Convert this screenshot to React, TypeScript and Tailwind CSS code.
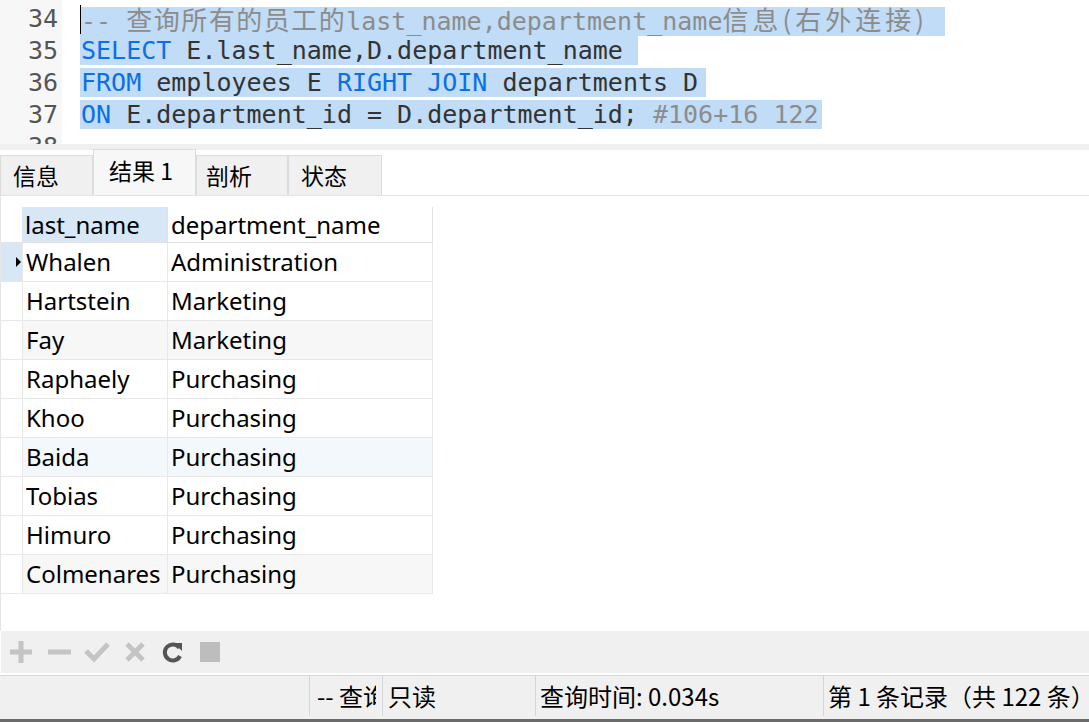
import React from 'react';

const mono = "font-['DejaVu_Sans_Mono',monospace]";
const cjk = "font-['Noto_Sans_CJK_SC',sans-serif]";
const ui = "font-['Noto_Sans','Noto_Sans_CJK_SC',sans-serif]";

const rows = [
  { name: 'Whalen', dept: 'Administration', bg: 'bg-white', current: true },
  { name: 'Hartstein', dept: 'Marketing', bg: 'bg-white' },
  { name: 'Fay', dept: 'Marketing', bg: 'bg-[#f7f7f7]' },
  { name: 'Raphaely', dept: 'Purchasing', bg: 'bg-white' },
  { name: 'Khoo', dept: 'Purchasing', bg: 'bg-white' },
  { name: 'Baida', dept: 'Purchasing', bg: 'bg-[#f3f8fd]' },
  { name: 'Tobias', dept: 'Purchasing', bg: 'bg-white' },
  { name: 'Himuro', dept: 'Purchasing', bg: 'bg-white' },
  { name: 'Colmenares', dept: 'Purchasing', bg: 'bg-[#f7f7f7]' },
];

function Kw({ children }: { children: React.ReactNode }) {
  return <span className="text-[#0b6fe6]">{children}</span>;
}

function Editor() {
  return (
    <div className={`flex h-[144px] overflow-hidden bg-white ${mono} text-[25px] leading-[32px]`}>
      <div className="w-[62px] shrink-0 bg-[#f7f7f7] pt-[3px] pr-[4px] text-right text-[#555]">
        <div>34</div>
        <div>35</div>
        <div>36</div>
        <div>37</div>
        <div>38</div>
      </div>
      <div className="ml-[18px] pt-[3px] whitespace-pre text-[#333]">
        <div className="relative h-[32px]">
          <span className="bg-[#c0dcf6] pl-[1px] pr-[17px] text-[#8c8c8c]">
            -- <span className={`${cjk} text-[26px] tracking-[1.5px]`}>查询所有的员工的</span>
            last_name,department_name
            <span className={`${cjk} text-[26px] tracking-[4px]`}>信息(右外连接)</span>
          </span>
          <span className="absolute left-0 top-[2px] h-[29px] w-[1px] bg-black" />
        </div>
        <div className="h-[32px]">
          <span className="bg-[#c0dcf6] pl-[1px]">
            <Kw>SELECT</Kw> E.last_name,D.department_name{' '}
          </span>
        </div>
        <div className="h-[32px]">
          <span className="bg-[#c0dcf6] pl-[1px] pr-[8px]">
            <Kw>FROM</Kw> employees E <Kw>RIGHT</Kw> <Kw>JOIN</Kw> departments D
          </span>
        </div>
        <div className="h-[32px]">
          <span className="bg-[#c0dcf6] pl-[1px] pr-[3px]">
            <Kw>ON</Kw> E.department_id = D.department_id; <span className="text-[#8c8c8c]">#106+16 122</span>
          </span>
        </div>
      </div>
    </div>
  );
}

function Tabs() {
  const tab = `flex h-[40px] items-center border border-b-0 border-[#dcdcdc] bg-[#f0f0f0] text-[23px] text-black ${cjk}`;
  return (
    <div className="flex h-[52px] items-end border-t-[6px] border-[#f0f0f0] bg-white">
      <div className="flex h-[46px] w-full items-end border-b border-[#e3e3e3]">
        <div className={`${tab} w-[93px] pl-[12px]`}>信息</div>
        <div className={`flex h-[46px] w-[103px] items-center border border-b-0 border-[#dcdcdc] bg-[#f7f7f7] pb-[4px] pl-[15px] text-[23px] text-black ${cjk}`}>
          结果 1
        </div>
        <div className={`${tab} w-[92px] pl-[9px]`}>剖析</div>
        <div className={`${tab} w-[94px] pl-[12px]`}>状态</div>
      </div>
    </div>
  );
}

function Grid() {
  return (
    <div className={`flex-1 border-l border-[#e6e6e6] bg-white pt-[11px] ${ui} text-[24px] text-black`}>
      <div className="w-[432px]">
        <div className="flex h-[36px] border-b border-[#e2e2e2]">
          <div className="w-[21px] shrink-0" />
          <div className="flex w-[145px] shrink-0 items-center bg-[#d7e7f6] pl-[3px]">last_name</div>
          <div className="flex w-[266px] shrink-0 items-center border-l border-r border-[#e2e2e2] pl-[3px]">department_name</div>
        </div>
        {rows.map((r) => (
          <div key={r.name} className="flex h-[39px] border-b border-[#e8e8e8]">
            <div className={`flex w-[21px] shrink-0 items-center justify-end pr-[1px] ${r.current ? 'bg-[#d7e7f6]' : 'bg-white'}`}>
              {r.current && (
                <span className="h-0 w-0 border-y-[5px] border-l-[5px] border-y-transparent border-l-black" />
              )}
            </div>
            <div className={`flex w-[145px] shrink-0 items-center overflow-hidden whitespace-nowrap border-l border-[#e8e8e8] pl-[3px] ${r.bg}`}>{r.name}</div>
            <div className={`flex w-[266px] shrink-0 items-center border-l border-r border-[#e8e8e8] pl-[3px] ${r.bg}`}>{r.dept}</div>
          </div>
        ))}
      </div>
    </div>
  );
}

function Toolbar() {
  return (
    <div className="flex h-[42px] items-center border-l border-white bg-[#f0f0f0] pl-[8px]">
      <svg width="24" height="24" viewBox="0 0 24 24" className="mr-[15px]">
        <path d="M12 1v22M1 12h22" stroke="#c4c4c4" strokeWidth="5" />
      </svg>
      <svg width="23" height="24" viewBox="0 0 23 24" className="mr-[13px]">
        <path d="M0 12h23" stroke="#c4c4c4" strokeWidth="5" />
      </svg>
      <svg width="26" height="24" viewBox="0 0 26 24" className="mr-[14px]">
        <path d="M2 11l8 8L24 4" stroke="#c4c4c4" strokeWidth="5" fill="none" />
      </svg>
      <svg width="22" height="24" viewBox="0 0 22 24" className="mr-[16px]">
        <path d="M3 4l16 16M19 4L3 20" stroke="#c4c4c4" strokeWidth="5" />
      </svg>
      <svg width="22" height="24" viewBox="0 0 22 24" className="mr-[16px]">
        <path d="M17.5 8A8 8 0 1 0 18 16" stroke="#555" strokeWidth="4" fill="none" />
        <path d="M12 3h8v8z" fill="#555" />
      </svg>
      <div className="h-[20px] w-[20px] bg-[#bdbdbd]" />
    </div>
  );
}

function StatusBar() {
  const cell = 'flex h-full items-center overflow-hidden whitespace-nowrap border-l border-[#d6d6d6]';
  return (
    <div className="border-t-[2px] border-white">
      <div className={`flex h-[44px] border-t border-[#d8d8d8] bg-[#f0f0f0] pb-[3px] ${cjk} text-[24px] text-black`}>
        <div className="w-[309px] shrink-0" />
        <div className={`${cell} w-[73px] pl-[7px] pr-[6px]`}>
          <span className="overflow-hidden">-- 查询所有的员工</span>
        </div>
        <div className={`${cell} w-[153px] pl-[5px]`}>只读</div>
        <div className={`${cell} w-[288px] pl-[4px]`}>查询时间: 0.034s</div>
        <div className={`${cell} flex-1 pl-[4px]`}>第 1 条记录（共 122 条）</div>
      </div>
      <div className="h-[3px] bg-[#6b6b6b]" />
    </div>
  );
}

export default function App() {
  return (
    <div className="flex h-[722px] w-[1089px] flex-col overflow-hidden bg-white">
      <Editor />
      <Tabs />
      <Grid />
      <Toolbar />
      <StatusBar />
    </div>
  );
}
